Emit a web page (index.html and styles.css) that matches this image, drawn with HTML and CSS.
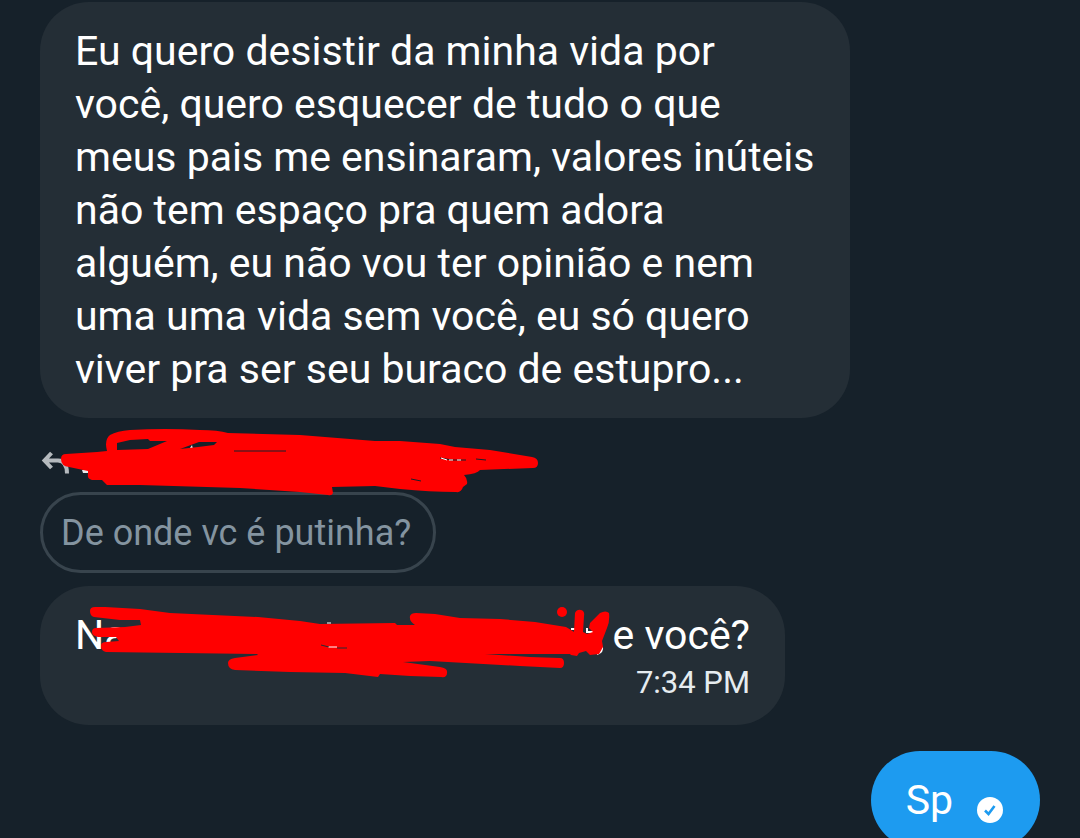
FILE: index.html
```
<!DOCTYPE html>
<html lang="pt-BR">

<head>
    <meta charset="UTF-8">
    <meta name="viewport" content="width=device-width, initial-scale=1.0">
    <title>Mensagens</title>
    <link rel="stylesheet" href="styles.css">
</head>

<body>
    <main class="chat">
        <div class="bubble bubble-long">
            Eu quero desistir da minha vida por<br>
            você, quero esquecer de tudo o que<br>
            meus pais me ensinaram, valores inúteis<br>
            não tem espaço pra quem adora<br>
            alguém, eu não vou ter opinião e nem<br>
            uma uma vida sem você, eu só quero<br>
            viver pra ser seu buraco de estupro...
        </div>

        <div class="reply-info">
            <svg class="reply-icon" width="30" height="26" viewBox="40 450 30 26">
                <path d="M51.500 453L44.500 460.500L51.500 468M45 460.500H58Q67 461 67 473.500" fill="none" stroke="#b5babe" stroke-width="4" />
            </svg>
            <svg class="scribble" width="510" height="80" viewBox="40 418 510 80">
                <path fill="#e8eaeb" d="M82 470h8v3h-7zM190 448l2-3 1 4z" />
                <path fill="#ff0000" fill-rule="evenodd" d="M61 459Q61 454 66 454L97 452L107 451Q104 440 110 435Q117 431 130 430Q165 428 200 430Q218 430 228 433L300 435L375 441L400 441L440 444L455 447L490 450L532 457Q538 458 538 463Q538 468 533 468L480 470Q477 474 464 475Q468 479 467 484L463 487Q461 493 456 492Q430 492 400 489L375 486L332 487L333 493Q332 496 328 495L300 492L240 488L140 485L107 485L102 480L92 480Q87 479 88 474L88 471L69 467Q61 466 61 459ZM117 443L130 440L148 439L150 441L167 441L148 449L117 450ZM180 449L199 442L217 442L214 445L198 447Z" />
                <path fill="none" stroke="#16212a" d="M234 451h52M440 458l12 2 14 0M476 459l10 1M411 479l10 2" />
                <path fill="none" stroke="#ffffff" d="M441 458l6 2M449 460h4M457 460h4" />
            </svg>
        </div>

        <div class="quote">De onde vc é putinha?</div>

        <div class="bubble bubble-answer">
            <div class="answer-line">
                <span>Na</span>
                <span>e você?</span>
            </div>
            <time class="time">7:34 PM</time>
            <svg class="scribble" width="580" height="100" viewBox="40 586 580 100">
                <path fill="none" stroke="#ffffff" stroke-width="2" d="M571 629h4M587 628v4h8M597 654q6-2 5-7" />
                <path fill="#ff0000" d="M90 611Q90 607 95 607L105 607L140 609L170 613L258 617L300 621L320 624L395 623L397 625L415 625Q409 621 410 616Q411 613 416 613L435 614L460 618L500 619L535 622L566 627L571 630L574 632L575 613Q577 609 581 610Q585 611 584 616L583 632L587 634L593 632L589 628L590 623L600 613Q606 610 609 613Q610 621 607 628L602 641L603 647L599 654L590 655L586 651L579 653L577 656L571 655L570 654L485 654L530 657L560 658Q564 658 564 663Q564 668 560 668L520 666L430 661L403 662L440 667Q448 668 447 673Q447 678 441 677L410 676L380 674L378 677L345 673L290 672L235 670Q228 669 228 663Q228 659 235 658L258 655L257 654L106 652Q101 651 101 646Q101 642 106 642L119 641L116 637L98 637Q92 636 92 632Q92 628 96 628L125 627L141 625L140 620L120 620L94 617Q90 616 90 611Z" />
                <circle cx="562" cy="612" r="5" fill="#ff0000" />
                <path fill="none" stroke="#ffffff" d="M327 623h4M328 647h9" />
                <path fill="none" stroke="#242e36" d="M321 645l8 2M337 648l10 0" />
            </svg>
        </div>

        <div class="bubble bubble-sent">
            <span>Sp</span>
            <svg class="sent-icon" width="26" height="26" viewBox="0 0 26 26">
                <circle cx="13" cy="13" r="13" fill="#ffffff" />
                <path d="M8 13.500L11.500 17L17.500 9" fill="none" stroke="#1d9bf0" stroke-width="2.600" />
            </svg>
        </div>
    </main>
</body>

</html>
```
FILE: styles.css
```
* {
    box-sizing: border-box;
}

body {
    margin: 0;
    background-color: #16212a;
    color: #fff;
    font-family: Roboto, "Noto Sans", sans-serif;
    font-size: 41px;
    line-height: 53px;
}

.chat {
    display: flex;
    flex-direction: column;
    align-items: flex-start;
    height: 100vh;
    padding: 2px 40px 0;
    overflow: hidden;
}

.bubble {
    flex-shrink: 0;
    padding: 23px 35px 22px;
    border-radius: 49px;
    background-color: #242e36;
}

.bubble-long {
    width: 81%;
    white-space: nowrap;
}

.reply-info {
    position: relative;
    flex-shrink: 0;
    padding-top: 32px;
    height: 74px;
}

.reply-icon {
    display: block;
}

/* red marker drawn over the names */
.scribble {
    position: absolute;
    top: 0;
    left: 0;
    z-index: 1;
}

.quote {
    flex-shrink: 0;
    padding: 15px 22px 13px 18px;
    border: 3px solid #38444d;
    border-radius: 41px;
    color: #8494a0;
    font-size: 36px;
    line-height: 47px;
}

.bubble-answer {
    position: relative;
    width: 745px;
    max-width: 100%;
    margin-top: 13px;
}

.answer-line {
    display: flex;
    justify-content: space-between;
}

.time {
    display: block;
    color: #e6ecf0;
    font-size: 31px;
    line-height: 41px;
    text-align: right;
}

.bubble-sent {
    display: flex;
    align-items: center;
    align-self: flex-end;
    gap: 24px;
    margin-top: 26px;
    padding-right: 37px;
    background-color: #1d9bf0;
}

.sent-icon {
    margin-top: 18px;
}
```
